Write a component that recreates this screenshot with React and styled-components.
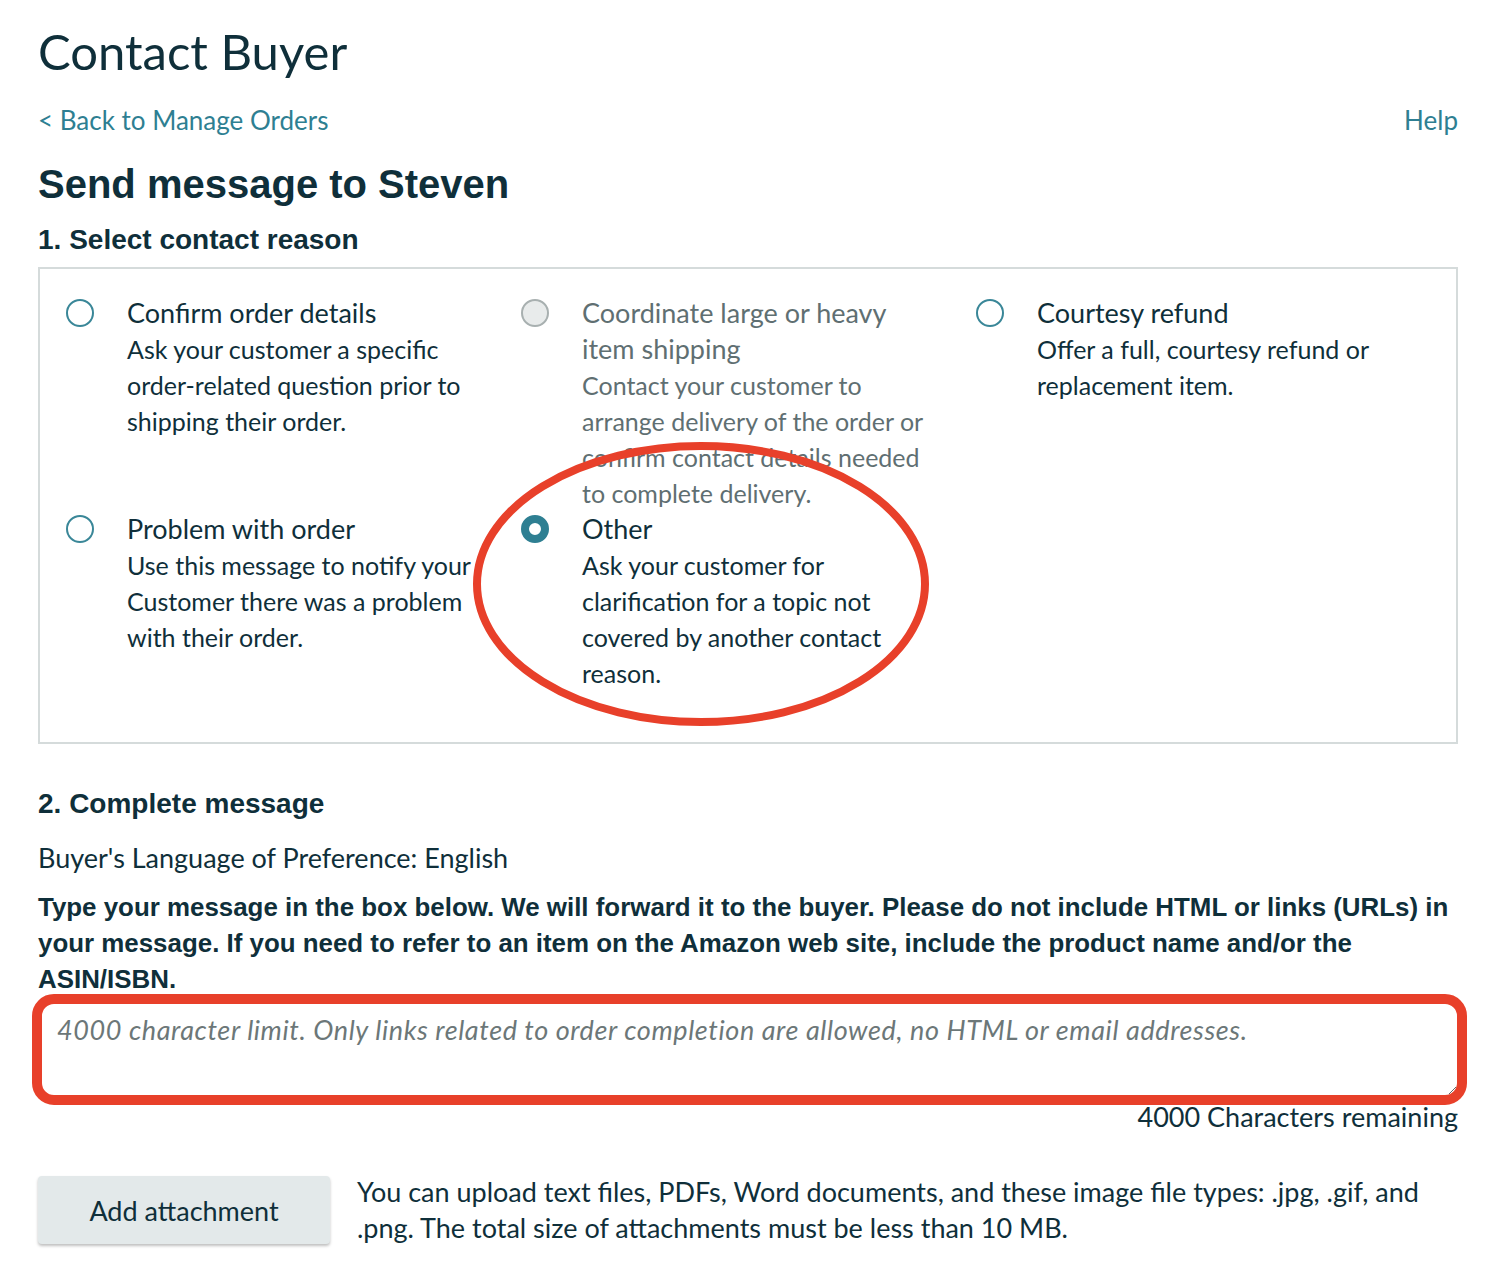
import React from "react";
import styled, { createGlobalStyle } from "styled-components";

const GlobalStyle = createGlobalStyle`
  body {
    margin: 0;
    background: #ffffff;
    font-family: "Lato", "Open Sans", sans-serif;
    color: #0f2f3a;
  }
`;

const reasons = [
  {
    id: "confirm",
    title: "Confirm order details",
    text: "Ask your customer a specific order-related question prior to shipping their order.",
  },
  {
    id: "coordinate",
    title: "Coordinate large or heavy item shipping",
    text: "Contact your customer to arrange delivery of the order or confirm contact details needed to complete delivery.",
    disabled: true,
  },
  {
    id: "refund",
    title: "Courtesy refund",
    text: "Offer a full, courtesy refund or replacement item.",
  },
  {
    id: "problem",
    title: "Problem with order",
    text: "Use this message to notify your Customer there was a problem with their order.",
  },
  {
    id: "other",
    title: "Other",
    text: "Ask your customer for clarification for a topic not covered by another contact reason.",
    selected: true,
  },
];

function App() {
  return (
    <>
      <GlobalStyle />
      <Page>
        <Title>Contact Buyer</Title>
        <LinkRow>
          <Link>&lt; Back to Manage Orders</Link>
          <Link>Help</Link>
        </LinkRow>
        <Heading>Send message to Steven</Heading>
        <StepTitle $top={14}>1. Select contact reason</StepTitle>
        <ReasonBox>
          {reasons.map((r) => (
            <Reason key={r.id} $disabled={r.disabled}>
              <Radio $selected={r.selected} $disabled={r.disabled} />
              <ReasonBody>
                <ReasonTitle>{r.title}</ReasonTitle>
                <ReasonText>{r.text}</ReasonText>
              </ReasonBody>
            </Reason>
          ))}
          <Ellipse viewBox="0 0 470 296" aria-hidden="true">
            <ellipse cx="235" cy="148" rx="224" ry="138" />
          </Ellipse>
        </ReasonBox>

        <StepTitle $top={42}>2. Complete message</StepTitle>
        <Language>Buyer's Language of Preference: English</Language>
        <Instructions>
          Type your message in the box below. We will forward it to the buyer.
          Please do not include HTML or links (URLs) in your message. If you
          need to refer to an item on the Amazon web site, include the product
          name and/or the ASIN/ISBN.
        </Instructions>
        <MessageWrap>
          <MessageBox placeholder="4000 character limit. Only links related to order completion are allowed, no HTML or email addresses." />
          <Highlight />
        </MessageWrap>
        <Remaining>4000 Characters remaining</Remaining>

        <AttachRow>
          <AttachButton>Add attachment</AttachButton>
          <AttachNote>
            You can upload text files, PDFs, Word documents, and these image
            file types: .jpg, .gif, and .png. The total size of attachments
            must be less than 10 MB.
          </AttachNote>
        </AttachRow>
      </Page>
    </>
  );
}

const Page = styled.div`
  padding: 22px 44px 30px 38px;
`;

const Title = styled.h1`
  margin: 0;
  font-family: "Lato", sans-serif;
  font-weight: 400;
  font-size: 49px;
  line-height: 58px;
  color: #0f2f3a;
`;

const LinkRow = styled.div`
  display: flex;
  justify-content: space-between;
  margin-top: 22px;
`;

const Link = styled.a`
  font-size: 26px;
  line-height: 36px;
  color: #2e7f92;
  cursor: pointer;
`;

const Heading = styled.h2`
  margin: 22px 0 0;
  font-family: "Liberation Sans", Arial, sans-serif;
  font-weight: 700;
  font-size: 40px;
  line-height: 48px;
  color: #0f2f3a;
`;

const StepTitle = styled.h3`
  margin: ${(p) => p.$top}px 0 0;
  font-family: "Liberation Sans", Arial, sans-serif;
  font-weight: 700;
  font-size: 28px;
  line-height: 36px;
  color: #0f2f3a;
`;

const ReasonBox = styled.div`
  position: relative;
  margin-top: 9px;
  border: 2px solid #d5dbdb;
  padding: 26px 20px 51px 26px;
  display: grid;
  grid-template-columns: repeat(3, 455px);
`;

const Reason = styled.div`
  display: flex;
  gap: 33px;
  color: ${(p) => (p.$disabled ? "#5f6f72" : "#0f2f3a")};
`;

const ReasonBody = styled.div`
  width: 354px;
`;

const Radio = styled.span`
  flex: none;
  box-sizing: border-box;
  width: 28px;
  height: 28px;
  margin-top: 4px;
  border-radius: 50%;
  border: ${(p) =>
    p.$selected
      ? "8px solid #2e7f92"
      : p.$disabled
      ? "2px solid #a8b0b0"
      : "2px solid #3a8798"};
  background: ${(p) => (p.$disabled ? "#e8ebeb" : "#ffffff")};
`;

const ReasonTitle = styled.div`
  font-size: 27px;
  line-height: 36px;
`;

const ReasonText = styled.div`
  font-size: 25px;
  line-height: 36px;
`;

const Ellipse = styled.svg`
  position: absolute;
  left: 426px;
  top: 167px;
  width: 470px;
  height: 296px;
  overflow: visible;
  pointer-events: none;
  ellipse {
    fill: none;
    stroke: #e8402a;
    stroke-width: 8;
  }
`;

const Language = styled.p`
  margin: 18px 0 0;
  font-size: 27px;
  line-height: 36px;
`;

const Instructions = styled.p`
  margin: 13px 0 0;
  font-family: "Liberation Sans", Arial, sans-serif;
  font-weight: 700;
  font-size: 25.9px;
  line-height: 36px;
`;

const MessageWrap = styled.div`
  position: relative;
  margin-top: 6px;
`;

const MessageBox = styled.textarea`
  display: block;
  box-sizing: border-box;
  width: 100%;
  height: 93px;
  padding: 10px 18px;
  border: 1px solid #a6b0b2;
  border-radius: 3px;
  font-family: "Lato", sans-serif;
  font-size: 27px;
  letter-spacing: 0.6px;
  line-height: 32px;
  color: #0f2f3a;
  resize: vertical;
  &::placeholder {
    font-style: italic;
    color: #6c7778;
  }
`;

const Highlight = styled.div`
  position: absolute;
  left: -6px;
  right: -9px;
  top: -9px;
  bottom: -9px;
  border: 10px solid #e8402a;
  border-radius: 22px;
  box-sizing: border-box;
  pointer-events: none;
`;

const Remaining = styled.div`
  text-align: right;
  font-size: 27px;
  line-height: 36px;
  margin-top: 3px;
`;

const AttachRow = styled.div`
  display: flex;
  align-items: flex-start;
  gap: 27px;
  margin-top: 41px;
`;

const AttachButton = styled.button`
  flex: none;
  width: 292px;
  height: 68px;
  border: none;
  border-radius: 4px;
  background: #e3e9ea;
  box-shadow: 0 2px 3px rgba(0, 0, 0, 0.25);
  font-family: "Lato", sans-serif;
  font-size: 27px;
  color: #0f2f3a;
  cursor: pointer;
`;

const AttachNote = styled.p`
  margin: -2px 0 0;
  font-size: 27px;
  line-height: 36px;
`;

export default App;
